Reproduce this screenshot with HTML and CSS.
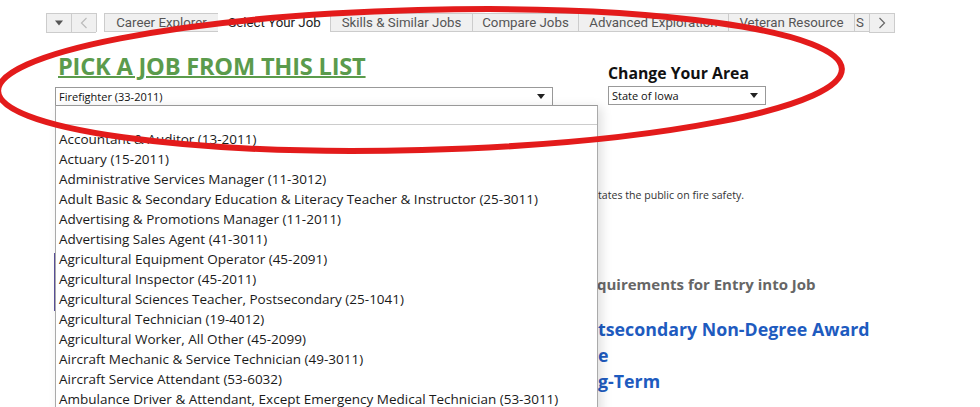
FILE: index.html
```html
<!DOCTYPE html>
<html>
<head>
<meta charset="utf-8">
<link rel="stylesheet" href="styles.css">
</head>
<body>
<div class="page">
  <nav class="tabbar">
    <div class="tbtn"><svg width="10" height="6" viewBox="0 0 10 6"><path d="M1 0.5h8L5 5.5z" fill="#555"/></svg></div>
    <div class="tbtn"><svg width="8" height="12" viewBox="0 0 8 12"><path d="M6.5 1L1.5 6l5 5" fill="none" stroke="#bbb" stroke-width="1.2"/></svg></div>
    <div class="tgap"></div>
    <div class="tab t-career">Career Explorer</div>
    <div class="tab active t-select">Select Your Job</div>
    <div class="tab t-skills">Skills &amp; Similar Jobs</div>
    <div class="tab t-compare">Compare Jobs</div>
    <div class="tab t-adv">Advanced Exploration</div>
    <div class="tab t-vet">Veteran Resource</div>
    <div class="tab clip">S</div>
    <div class="tbtn next"><svg width="8" height="12" viewBox="0 0 8 12"><path d="M1.5 1l5 5-5 5" fill="none" stroke="#666" stroke-width="1.2"/></svg></div>
  </nav>

  <div class="top">
    <div class="left">
      <h1 class="title">PICK A JOB FROM THIS LIST</h1>
      <div class="select big"><span>Firefighter (33-2011)</span><svg width="8" height="5" viewBox="0 0 8 5"><path d="M0 0h8L4 5z" fill="#222"/></svg></div>
    </div>
    <div class="right">
      <h2 class="area">Change Your Area</h2>
      <div class="select small"><span>State of Iowa</span><svg width="8" height="5" viewBox="0 0 8 5"><path d="M0 0h8L4 5z" fill="#222"/></svg></div>
    </div>
  </div>

  <div class="behind">
    <div class="purple"></div>
    <p class="desc">tates the public on fire safety.</p>
    <p class="req">quirements for Entry into Job</p>
    <div class="edu">
      <p>tsecondary Non-Degree Award</p>
      <p>e</p>
      <p>g-Term</p>
    </div>
  </div>

  <div class="droplist">
    <div class="search"></div>
    <ul class="items">
      <li>Accountant &amp; Auditor (13-2011)</li>
      <li>Actuary (15-2011)</li>
      <li>Administrative Services Manager (11-3012)</li>
      <li>Adult Basic &amp; Secondary Education &amp; Literacy Teacher &amp; Instructor (25-3011)</li>
      <li>Advertising &amp; Promotions Manager (11-2011)</li>
      <li>Advertising Sales Agent (41-3011)</li>
      <li>Agricultural Equipment Operator (45-2091)</li>
      <li>Agricultural Inspector (45-2011)</li>
      <li>Agricultural Sciences Teacher, Postsecondary (25-1041)</li>
      <li>Agricultural Technician (19-4012)</li>
      <li>Agricultural Worker, All Other (45-2099)</li>
      <li>Aircraft Mechanic &amp; Service Technician (49-3011)</li>
      <li>Aircraft Service Attendant (53-6032)</li>
      <li>Ambulance Driver &amp; Attendant, Except Emergency Medical Technician (53-3011)</li>
    </ul>
  </div>

  <svg class="annot" width="980" height="407" viewBox="0 0 980 407">
    <ellipse cx="420" cy="80" rx="422" ry="70" transform="rotate(-1.5 420 80)" fill="none" stroke="#e31b1b" stroke-width="6"/>
  </svg>
</div>
</body>
</html>
```

FILE: styles.css
```css
html, body {
  margin: 0;
  padding: 0;
  background: #fff;
}
.page {
  position: relative;
  width: 980px;
  height: 407px;
  overflow: hidden;
  font-family: "Open Sans", "Noto Sans", sans-serif;
}
.tabbar {
  display: flex;
  margin: 13px 0 0 46px;
  height: 19px;
  font-family: Roboto, "Liberation Sans", sans-serif;
  font-size: 13.3px;
  color: #555;
}
.tbtn {
  width: 24px;
  height: 18px;
  border: 1px solid #ccc;
  border-right: none;
  background: #f0f0f0;
  display: flex;
  align-items: center;
  justify-content: center;
}
.tbtn.next {
  border-right: 1px solid #ccc;
}
.tgap {
  width: 7px;
  border-left: 1px solid #ccc;
}
.tab {
  box-sizing: border-box;
  flex: none;
  height: 19px;
  line-height: 18px;
  border: 1px solid #ccc;
  border-right: none;
  background: #f0f0f0;
  white-space: nowrap;
  text-align: center;
}
.t-career { width: 114px; }
.t-select { width: 112px; }
.t-skills { width: 142px; }
.t-compare { width: 106px; }
.t-adv { width: 150px; }
.t-vet { width: 126px; }
.tab.active {
  background: #fff;
  color: #222;
  border-color: transparent;
}
.tab.active + .tab {
  border-left-color: #ccc;
}
.tab.clip {
  width: 15px;
  padding-left: 1px;
  text-align: left;
  overflow: hidden;
}
.top {
  display: flex;
  margin-top: 22px;
}
.left {
  margin-left: 55px;
  width: 498px;
}
.title {
  margin: 0 0 8px 3px;
  font-size: 23.6px;
  line-height: 25px;
  font-weight: 700;
  color: #5b9b4c;
  text-decoration: underline;
  text-decoration-thickness: 2px;
  text-underline-offset: 1px;
  letter-spacing: -0.2px;
  white-space: nowrap;
}
.right {
  margin-left: 55px;
  padding-top: 10px;
}
.area {
  margin: 0 0 4px 0;
  font-size: 15.8px;
  line-height: 18px;
  font-weight: 700;
  color: #111;
}
.select {
  box-sizing: border-box;
  height: 19px;
  border: 1px solid #999;
  display: flex;
  align-items: center;
  justify-content: space-between;
  padding: 0 7px 0 3px;
  font-size: 11px;
  color: #111;
  background: #fff;
}
.select.big {
  width: 498px;
}
.select.small {
  width: 158px;
}
.behind {
  position: relative;
  height: 300px;
}
.purple {
  position: absolute;
  left: 54px;
  top: 147px;
  width: 2px;
  height: 58px;
  background: #5a4f9a;
}
.behind p {
  margin: 0;
  white-space: nowrap;
}
.desc {
  position: absolute;
  left: 598px;
  top: 82px;
  font-size: 10.6px;
  color: #333;
}
.req {
  position: absolute;
  left: 597px;
  top: 168px;
  font-size: 15px;
  font-weight: 700;
  color: #666;
}
.edu {
  position: absolute;
  left: 598px;
  top: 210px;
  font-size: 17.8px;
  font-weight: 700;
  color: #1e5bbf;
  line-height: 26px;
}
.droplist {
  position: absolute;
  left: 55px;
  top: 105px;
  width: 543px;
  height: 320px;
  box-sizing: border-box;
  border: 1px solid #aaa;
  border-top: 1px solid #999;
  background: #fff;
  box-shadow: 4px 2px 10px rgba(0, 0, 0, 0.12);
}
.search {
  height: 18px;
  border-bottom: 1px solid #ccc;
}
.items {
  list-style: none;
  margin: 0;
  padding: 4px 0 0 3px;
  font-size: 13.5px;
  color: #1a1a1a;
}
.items li {
  height: 20px;
  line-height: 20px;
  white-space: nowrap;
}
.annot {
  position: absolute;
  left: 0;
  top: 0;
  pointer-events: none;
}
```
